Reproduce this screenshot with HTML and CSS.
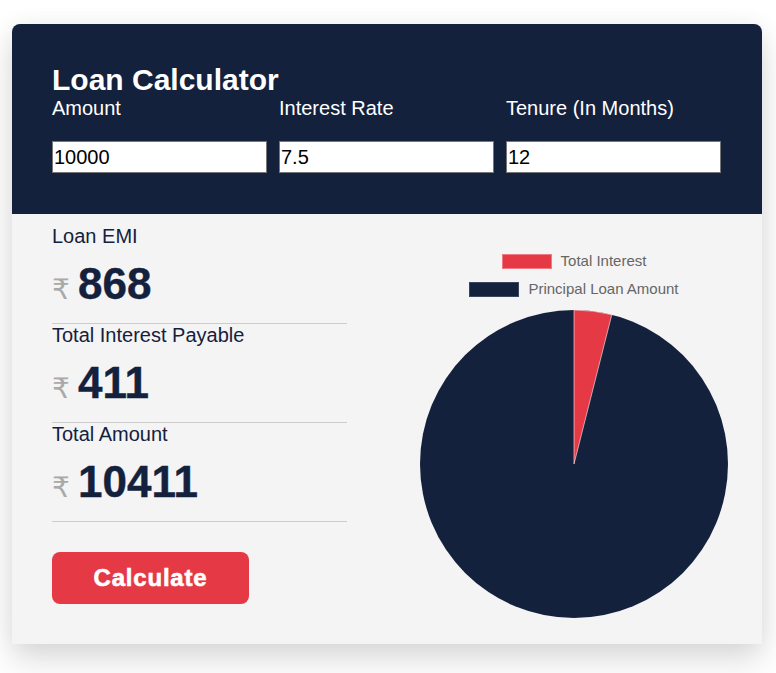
FILE: index.html
```html
<!DOCTYPE html>
<html>
<head>
<meta charset="utf-8">
<link rel="stylesheet" href="styles.css">
</head>
<body>
<div class="card">
  <div class="header">
    <h1 class="title">Loan Calculator</h1>
    <div class="fields">
      <div class="field">
        <label class="field-label">Amount</label>
        <input class="field-input" type="text" value="10000">
      </div>
      <div class="field">
        <label class="field-label">Interest Rate</label>
        <input class="field-input" type="text" value="7.5">
      </div>
      <div class="field">
        <label class="field-label">Tenure (In Months)</label>
        <input class="field-input" type="text" value="12">
      </div>
    </div>
  </div>
  <div class="content">
    <div class="results">
      <div class="result">
        <div class="result-label">Loan EMI</div>
        <div class="result-value"><span class="rupee">₹</span><span class="amount">868</span></div>
      </div>
      <div class="result">
        <div class="result-label">Total Interest Payable</div>
        <div class="result-value"><span class="rupee">₹</span><span class="amount">411</span></div>
      </div>
      <div class="result">
        <div class="result-label">Total Amount</div>
        <div class="result-value"><span class="rupee">₹</span><span class="amount">10411</span></div>
      </div>
      <button class="calc-btn">Calculate</button>
    </div>
    <div class="chart">
      <div class="legend">
        <div class="legend-item"><span class="swatch swatch-red"></span><span>Total Interest</span></div>
        <div class="legend-item"><span class="swatch swatch-navy"></span><span>Principal Loan Amount</span></div>
      </div>
      <svg class="pie" width="308" height="308" viewBox="0 0 308 308">
        <circle cx="154" cy="154" r="154" fill="#14213d"/>
        <path d="M154 154 L154 0 A154 154 0 0 1 191.8 4.7 Z" fill="#e63946" stroke="#f4f4f4" stroke-width="0.6"/>
      </svg>
    </div>
  </div>
</div>
</body>
</html>
```

FILE: styles.css
```css
* { box-sizing: border-box; }
html, body {
  background: #ffffff;
}
body {
  margin: 0;
  padding: 24px 12px 40px;
  min-height: 673px;
  font-family: "Liberation Sans", Arial, sans-serif;
}
.card {
  width: 750px;
  border-radius: 8px 8px 0 0;
  overflow: hidden;
  background: #f4f4f4;
  box-shadow: 0 16px 32px rgba(0, 0, 0, 0.14), 0 0 24px rgba(0, 0, 0, 0.05);
}
.header {
  background: #14213d;
  padding: 39px 40px 41px;
  color: #ffffff;
}
.title {
  margin: 0;
  font-size: 30px;
  line-height: 34px;
  font-weight: 700;
}
.fields {
  display: grid;
  grid-template-columns: repeat(3, 215px);
  column-gap: 12px;
}
.field {
  display: flex;
  flex-direction: column;
}
.field-label {
  font-size: 20px;
  line-height: 23px;
}
.field-input {
  margin-top: 21px;
  height: 32px;
  width: 215px;
  border: 1px solid #767676;
  padding: 1px 1px;
  font-family: "Liberation Sans", Arial, sans-serif;
  font-size: 20px;
  color: #000;
  background: #fff;
  outline: none;
}
.content {
  display: grid;
  grid-template-columns: 295px 1fr;
  padding: 11px 34px 26px 40px;
}
.results {
  display: flex;
  flex-direction: column;
  align-items: flex-start;
}
.result {
  width: 295px;
  border-bottom: 1px solid #cccccc;
}
.result-label {
  font-size: 20px;
  line-height: 23px;
  color: #14213d;
}
.result-value {
  margin-top: 12px;
  margin-bottom: 15px;
  height: 48px;
  display: flex;
  align-items: baseline;
  line-height: 48px;
}
.rupee {
  font-family: "DejaVu Sans", "Liberation Sans", sans-serif;
  font-size: 28px;
  color: #a9a9a9;
  width: 26px;
}
.amount {
  font-size: 44px;
  font-weight: 700;
  color: #14213d;
  -webkit-text-stroke: 0.4px #14213d;
}
.calc-btn {
  margin-top: 30px;
  width: 197px;
  height: 52px;
  border: none;
  border-radius: 8px;
  background: #e63946;
  color: #ffffff;
  font-family: "Liberation Sans", Arial, sans-serif;
  font-size: 24px;
  font-weight: 700;
  letter-spacing: 0.8px;
  -webkit-text-stroke: 0.6px #ffffff;
  cursor: pointer;
}
.chart {
  justify-self: end;
  width: 308px;
  padding-top: 27px;
  display: flex;
  flex-direction: column;
  align-items: center;
}
.legend {
  display: flex;
  flex-direction: column;
  align-items: center;
  gap: 10px;
}
.legend-item {
  display: flex;
  align-items: center;
  font-size: 15px;
  line-height: 18px;
  color: #666666;
  white-space: nowrap;
}
.swatch {
  width: 50px;
  height: 15px;
  margin-right: 9px;
}
.swatch-red { background: #e63946; border: 1px solid #f07a84; }
.swatch-navy { background: #14213d; border: 1px solid #3a4560; }
.pie {
  margin-top: 12px;
  display: block;
}
```
